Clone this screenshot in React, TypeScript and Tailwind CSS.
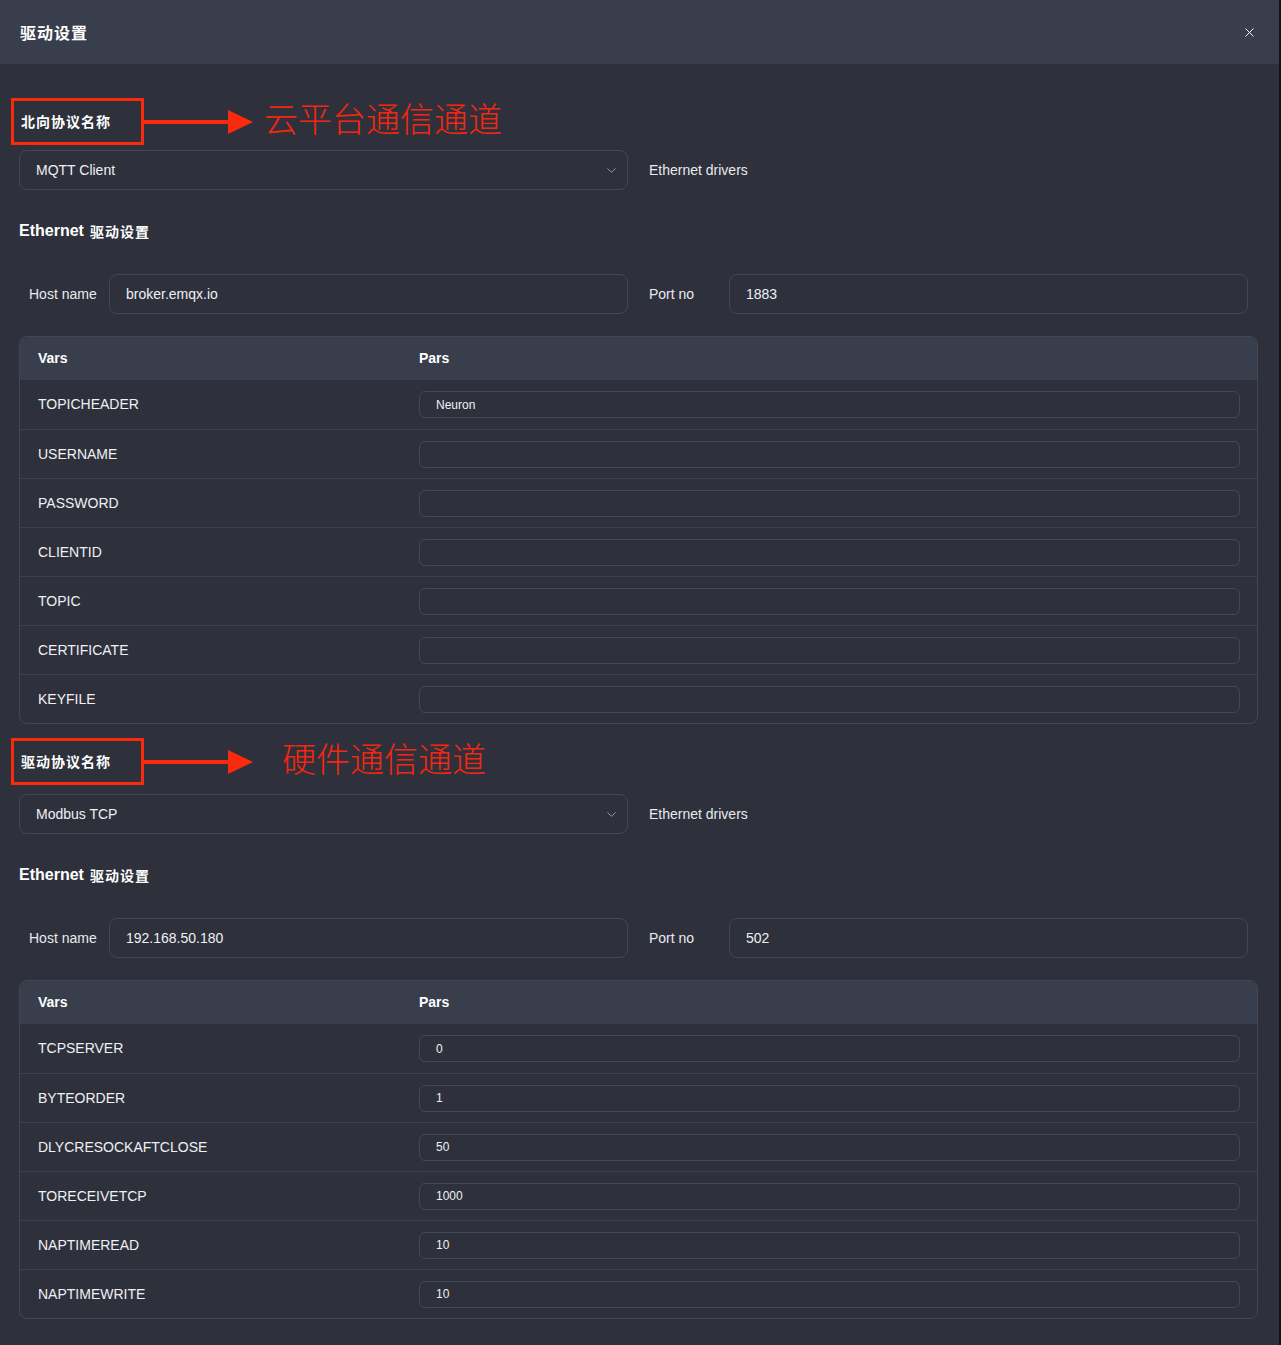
import { ChevronDown, X } from "lucide-react";

const SANS = "font-['Liberation_Sans','Helvetica','Arial',sans-serif]";
const CJK = "font-['Noto_Sans_CJK_SC','Noto_Sans',serif]";

type Row = { name: string; value: string };

const MQTT_ROWS: Row[] = [
  { name: "TOPICHEADER", value: "Neuron" },
  { name: "USERNAME", value: "" },
  { name: "PASSWORD", value: "" },
  { name: "CLIENTID", value: "" },
  { name: "TOPIC", value: "" },
  { name: "CERTIFICATE", value: "" },
  { name: "KEYFILE", value: "" },
];

const MODBUS_ROWS: Row[] = [
  { name: "TCPSERVER", value: "0" },
  { name: "BYTEORDER", value: "1" },
  { name: "DLYCRESOCKAFTCLOSE", value: "50" },
  { name: "TORECEIVETCP", value: "1000" },
  { name: "NAPTIMEREAD", value: "10" },
  { name: "NAPTIMEWRITE", value: "10" },
];

function Annotation({ label, note, gap }: { label: string; note: string; gap: string }) {
  return (
    <div className="flex items-center -ml-[8px] h-[47px]">
      <div className="h-[47px] w-[133px] border-[3px] border-[#fb2a0c] flex items-center pl-[7px]">
        <span className={`${CJK} text-[14px] font-bold text-white tracking-[1px]`}>{label}</span>
      </div>
      {/* arrow */}
      <div className="w-[84px] h-[4px] bg-[#fb2a0c]" />
      <svg width="25" height="24" viewBox="0 0 25 24" className="block">
        <polygon points="0,0 25,12 0,24" fill="#fb2a0c" />
      </svg>
      <span className={`${CJK} ${gap} mb-[7px] text-[34px] leading-none font-light text-[#f5260f]`}>{note}</span>
    </div>
  );
}

function Field({ value, className = "" }: { value: string; className?: string }) {
  return (
    <div
      className={`h-[40px] rounded-lg border border-[#41465a] flex items-center px-4 text-[14px] text-[#eef0f4] ${className}`}
    >
      {value}
    </div>
  );
}

function DriverBlock({
  annotation,
  note,
  gap,
  below,
  driver,
  host,
  port,
  rows,
}: {
  annotation: string;
  note: string;
  gap: string;
  below: string;
  driver: string;
  host: string;
  port: string;
  rows: Row[];
}) {
  return (
    <div>
      <Annotation label={annotation} note={note} gap={gap} />

      {/* driver select */}
      <div className={`${below} grid grid-cols-[609px_599px] gap-x-[21px] items-center`}>
        <div className="h-[40px] rounded-lg border border-[#41465a] flex items-center justify-between pl-4 pr-[8px] text-[14px] text-[#eef0f4]">
          <span>{driver}</span>
          <ChevronDown size={15} strokeWidth={1.5} className="text-[#9aa0ad]" />
        </div>
        <div className="text-[14px] text-[#e8eaee]">Ethernet drivers</div>
      </div>

      <div className="mt-[31px] h-[20px] flex items-center text-[16px] font-bold text-white">
        <span>Ethernet</span>
        <span className={`${CJK} ml-[6px] text-[14px] tracking-[1px]`}>驱动设置</span>
      </div>

      {/* host / port */}
      <div className="mt-[33px] grid grid-cols-[609px_599px] gap-x-[21px]">
        <div className="flex items-center">
          <span className="w-[90px] pl-[10px] text-[14px] text-[#e8eaee]">Host name</span>
          <Field value={host} className="flex-1" />
        </div>
        <div className="flex items-center">
          <span className="w-[80px] text-[14px] text-[#e8eaee]">Port no</span>
          <Field value={port} className="flex-1" />
        </div>
      </div>

      {/* vars table */}
      <div className="mt-[22px] w-[1239px] rounded-lg border border-[#41465a] overflow-hidden">
        <div className="h-[43px] bg-[#393e4c] flex items-center text-[14px] font-bold text-white">
          <div className="w-[399px] pl-[18px]">Vars</div>
          <div className="flex-1">Pars</div>
        </div>
        {rows.map((r, i) => (
          <div
            key={r.name}
            className={`h-[49px] flex items-center ${i > 0 ? "border-t border-[#3b4050]" : ""}`}
          >
            <div className="w-[399px] pl-[18px] text-[14px] text-[#eef0f4]">{r.name}</div>
            <div className="flex-1 pr-[17px]">
              <div className="h-[27px] rounded-md border border-[#434859] flex items-center px-4 text-[12px] text-[#eef0f4]">
                {r.value}
              </div>
            </div>
          </div>
        ))}
      </div>
    </div>
  );
}

export default function App() {
  return (
    <div className={`${SANS} w-[1281px] h-[1345px] flex bg-[#2e313c] overflow-hidden`}>
      <div className="flex-1 flex flex-col">
        {/* ── Header ───────────────────────────── */}
        <div className="h-16 shrink-0 bg-[#393e4c] flex items-center justify-between pl-5 pr-[22px]">
          <span className={`${CJK} text-[16px] font-bold text-white tracking-[1px]`}>驱动设置</span>
          <X size={15} strokeWidth={1.5} className="text-white" />
        </div>

        {/* ── Body ─────────────────────────────── */}
        <div className="pl-[19px] pt-[34px]">
          <DriverBlock
            annotation="北向协议名称"
            note="云平台通信通道"
            gap="ml-[11px]"
            below="mt-[5px]"
            driver="MQTT Client"
            host="broker.emqx.io"
            port="1883"
            rows={MQTT_ROWS}
          />
          <div className="h-[14px]" />
          <DriverBlock
            annotation="驱动协议名称"
            note="硬件通信通道"
            gap="ml-[29px]"
            below="mt-[9px]"
            driver="Modbus TCP"
            host="192.168.50.180"
            port="502"
            rows={MODBUS_ROWS}
          />
        </div>
      </div>
      <div className="w-[2px] bg-[#111318]" />
    </div>
  );
}
